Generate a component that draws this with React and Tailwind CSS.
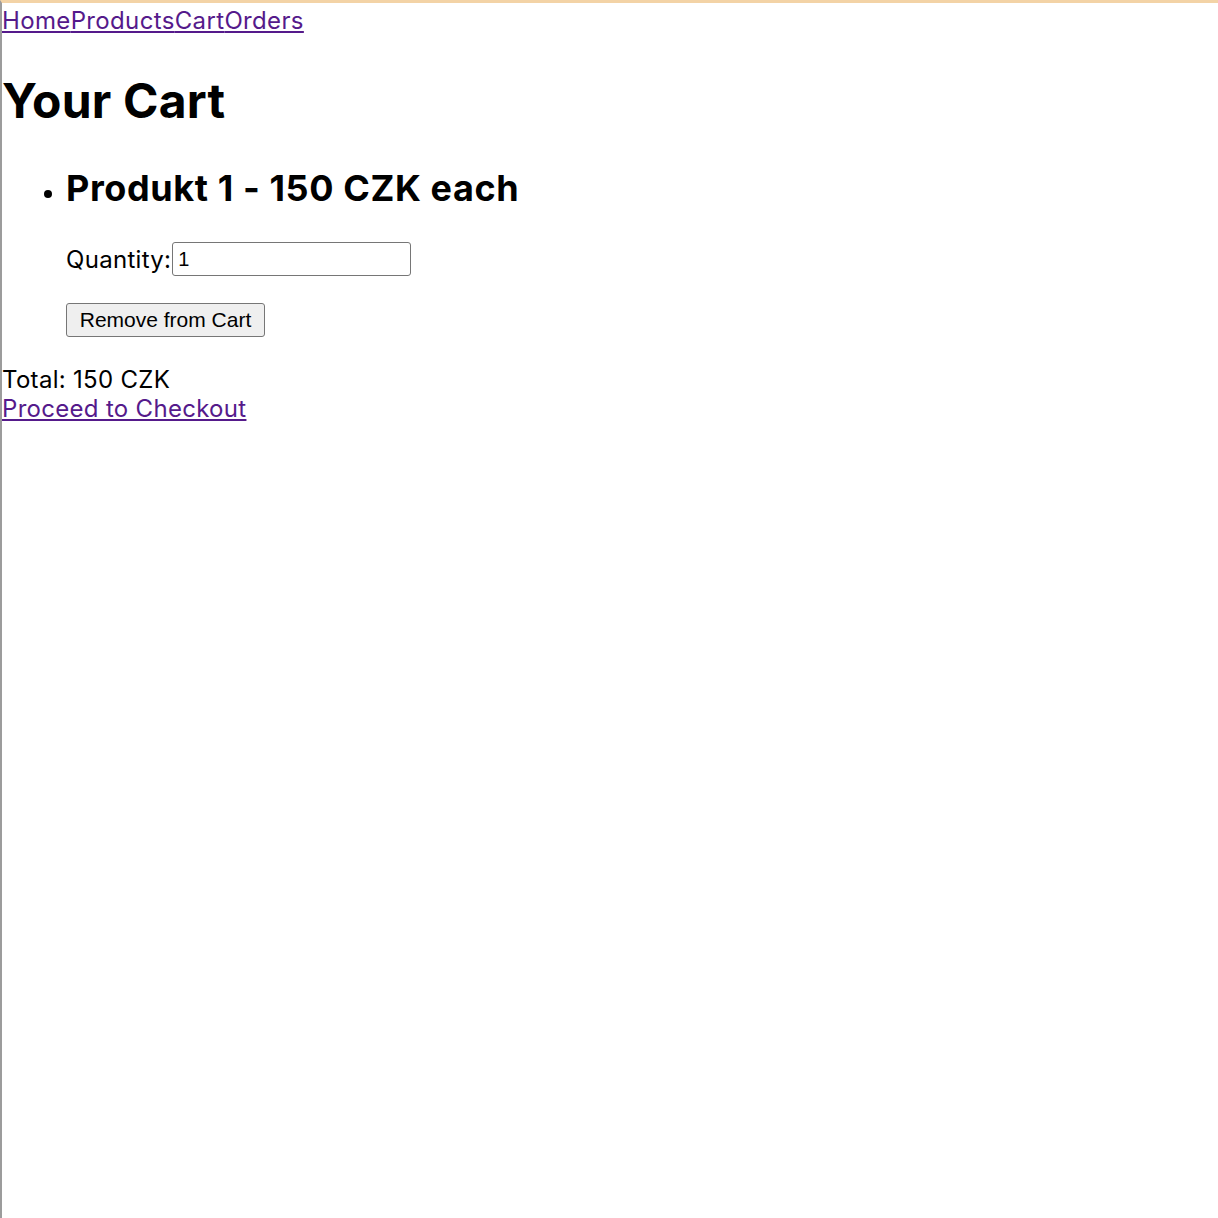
export default function App() {
  return (
    <div className="min-h-[1218px] bg-white border-t-[3px] border-t-[#f3d3a6] border-l-2 border-l-[#9c9c9c] font-['Inter',sans-serif] text-[24px] leading-[29px] tracking-[0.3px] text-black">
      <nav className="flex pt-[3px] text-[#551a8b] tracking-[0.35px]">
        <a href="#" className="underline">Home</a>
        <a href="#" className="underline">Products</a>
        <a href="#" className="underline">Cart</a>
        <a href="#" className="underline">Orders</a>
      </nav>
      <h1 className="mt-[37px] text-[48px] leading-[58px] font-bold tracking-[0.2px]">Your Cart</h1>
      <ul className="mt-[36px] pl-[64px] list-disc">
        <li>
          <h2 className="text-[36px] leading-[44px] font-bold tracking-[0.6px]">Produkt 1 - 150 CZK each</h2>
          <div className="mt-[32px] flex items-center">
            <span>Quantity:</span>
            <input
              type="number"
              defaultValue={1}
              className="ml-[1px] w-[239px] h-[34px] border border-[#767676] rounded-[3px] px-[5px] font-['Liberation_Sans',sans-serif] text-[20px] tracking-normal bg-white"
            />
          </div>
          <div className="mt-[27px]">
            <button className="h-[34px] w-[199px] px-[12px] border border-[#767676] rounded-[3px] bg-[#efefef] font-['Liberation_Sans',sans-serif] text-[21px] leading-[24px] tracking-normal">
              Remove from Cart
            </button>
          </div>
        </li>
      </ul>
      <div className="mt-[28px]">Total: 150 CZK</div>
      <a href="#" className="underline text-[#551a8b]">Proceed to Checkout</a>
    </div>
  );
}
